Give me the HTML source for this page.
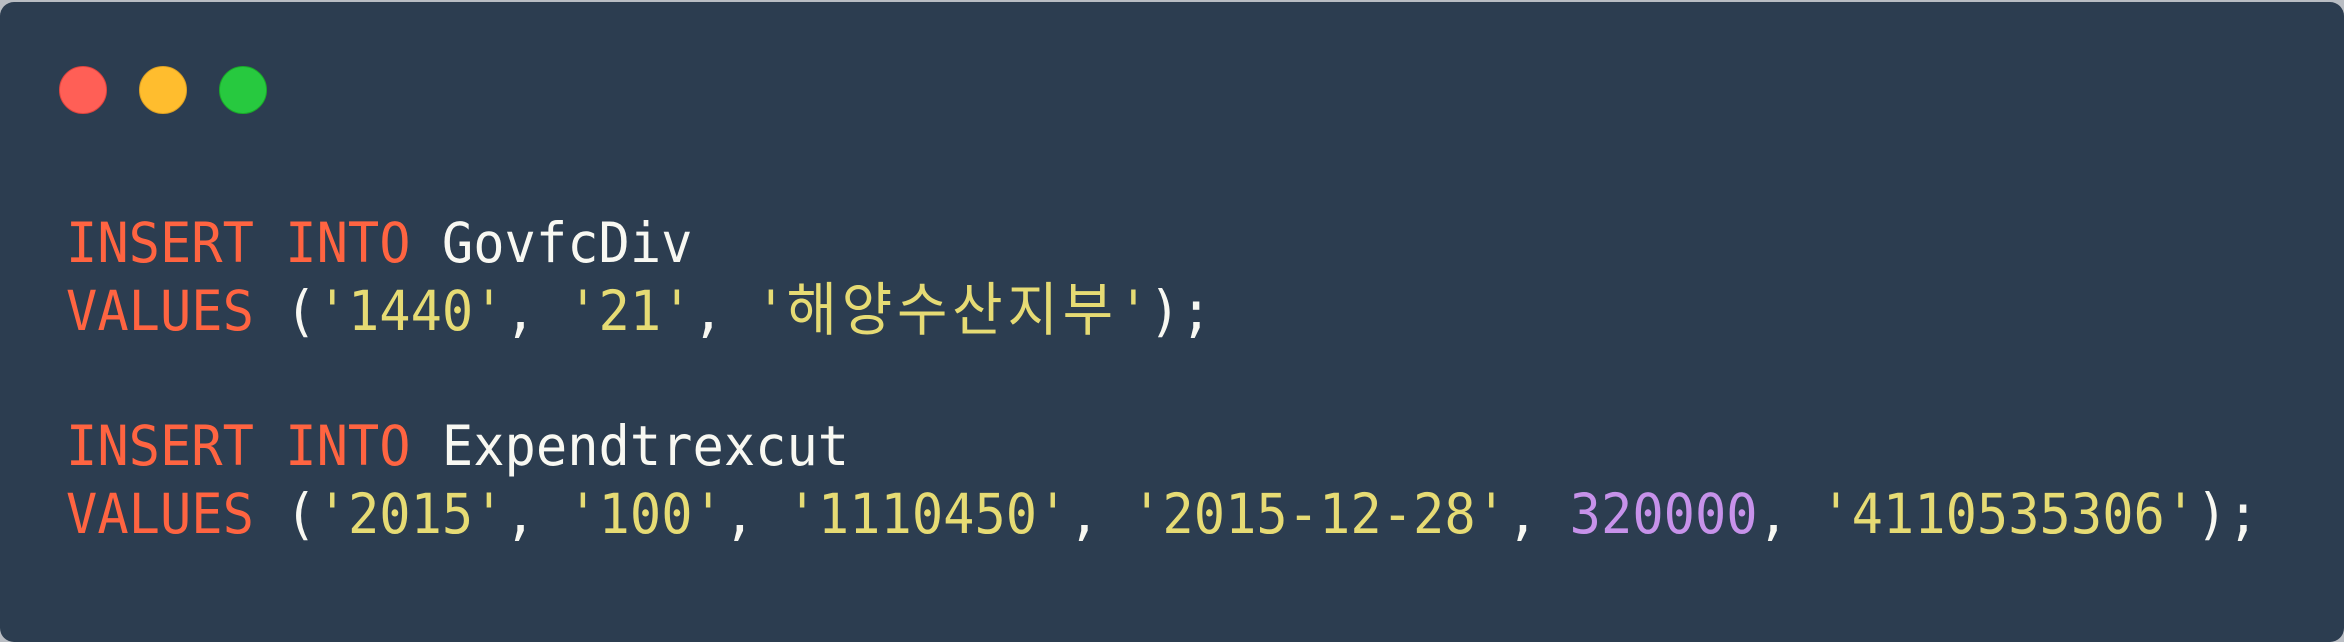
<!DOCTYPE html>
<html><head><meta charset="utf-8"><style>
html,body{margin:0;padding:0;}
body{width:2344px;height:636px;background:#b9bdc3;position:relative;overflow:hidden;}
.win{position:absolute;left:0;top:2px;width:2344px;height:640px;background:#2c3d50;border-radius:14px;}
.dot{position:absolute;top:64px;width:46px;height:46px;border-radius:50%;border:1.5px solid;}
.r{left:59px;background:#ff5f56;border-color:#e0443e;}
.y{left:139px;background:#ffbd2e;border-color:#dea123;}
.g{left:219px;background:#27c93f;border-color:#1aab29;}
pre{position:absolute;left:66px;top:210px;margin:0;font-family:"DejaVu Sans Mono","Liberation Mono","Noto Sans CJK KR",monospace;font-size:55px;line-height:67.8px;color:#f8f8f2;transform:scaleX(0.946);transform-origin:0 0;}
.k{color:#ff6441;}.s{color:#e6db74;}.n{color:#c792ea;}
.ko{font-family:"Noto Sans CJK KR",sans-serif;font-size:58px;letter-spacing:5px;line-height:0;}
</style></head><body>
<div class="win">
<div class="dot r"></div><div class="dot y"></div><div class="dot g"></div>
</div>
<pre><span class="k">INSERT INTO</span> GovfcDiv
<span class="k">VALUES</span> (<span class="s">'1440'</span>, <span class="s">'21'</span>, <span class="s">'<span class="ko">해양수산지부</span>'</span>);

<span class="k">INSERT INTO</span> Expendtrexcut
<span class="k">VALUES</span> (<span class="s">'2015'</span>, <span class="s">'100'</span>, <span class="s">'1110450'</span>, <span class="s">'2015-12-28'</span>, <span class="n">320000</span>, <span class="s">'4110535306'</span>);</pre>
</body></html>
